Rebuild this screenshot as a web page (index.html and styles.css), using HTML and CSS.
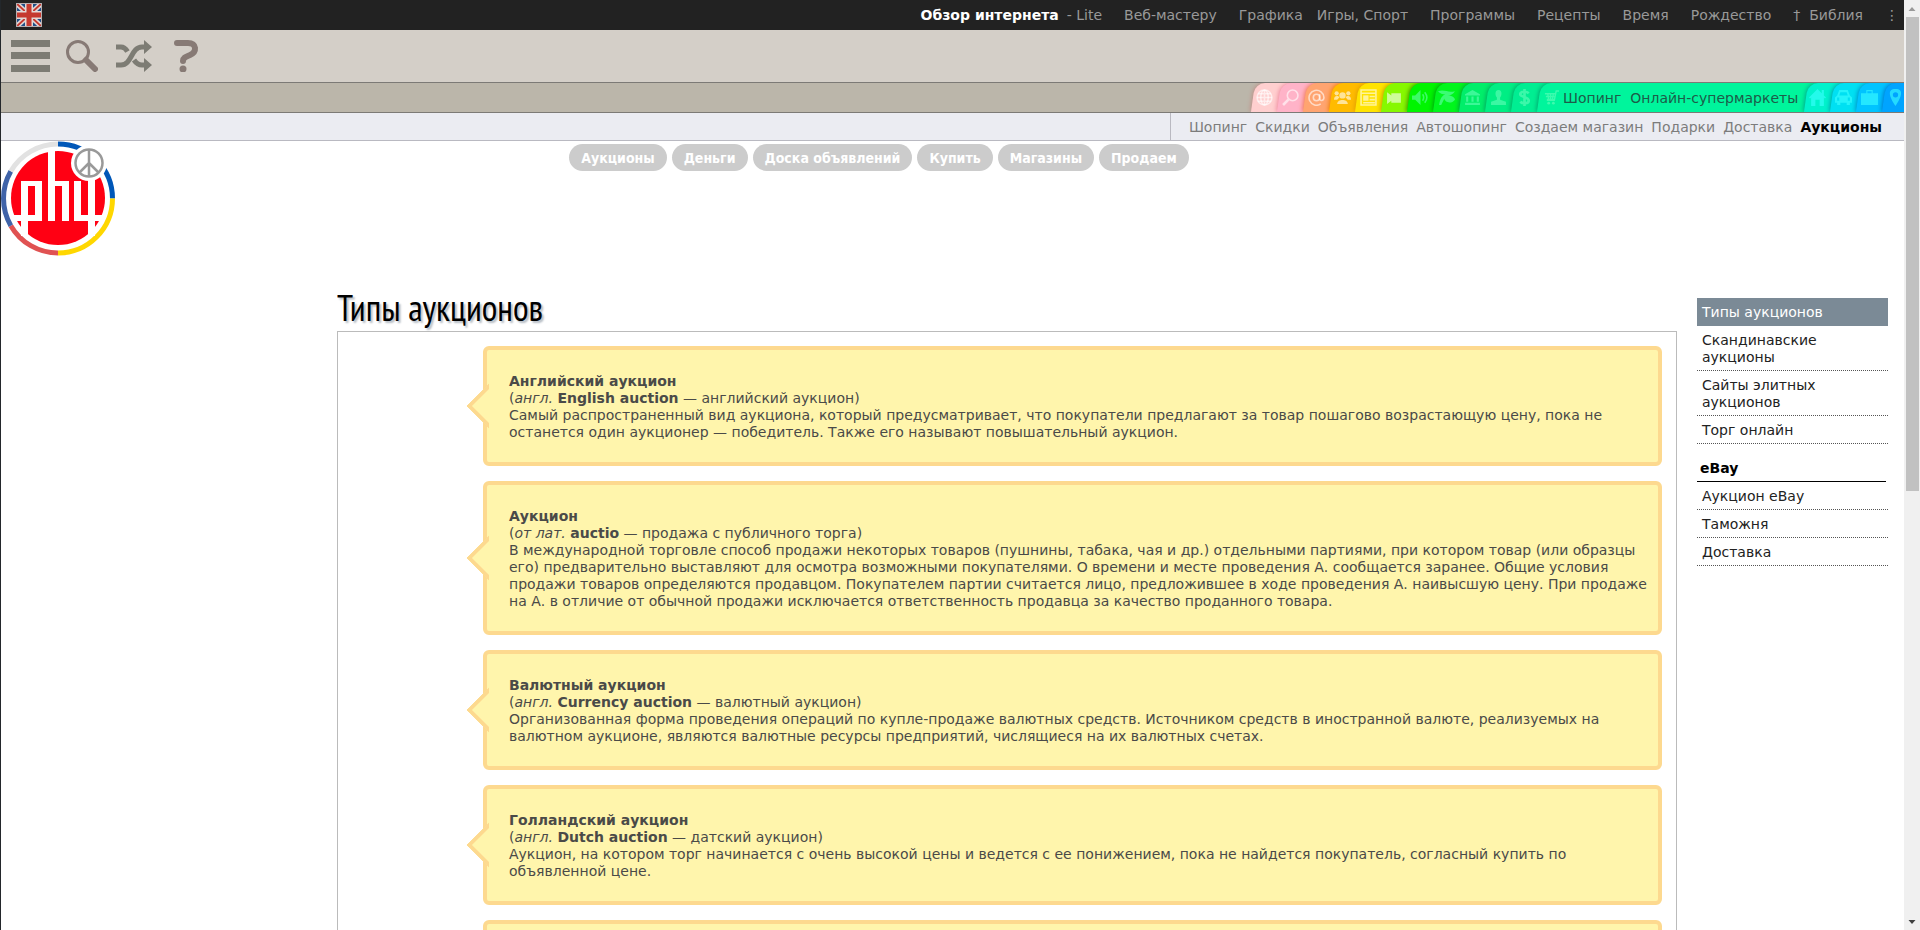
FILE: index.html
```html
<!DOCTYPE html>
<html lang="ru">
<head>
<meta charset="utf-8">
<title>Типы аукционов</title>
<link rel="stylesheet" href="styles.css">
</head>
<body>
<div class="window">
<div class="page">
  <header>
    <div class="topbar">
      <a class="flag" href="#" aria-label="English">
        <svg width="26" height="24" viewBox="0 0 26 24">
          <rect width="26" height="24" fill="#1f4f87"/>
          <path d="M0 0L26 24M26 0L0 24" stroke="#e3d9d6" stroke-width="5"/>
          <path d="M0 0L26 24M26 0L0 24" stroke="#c5392f" stroke-width="2"/>
          <path d="M13 0V24M0 12H26" stroke="#e3d9d6" stroke-width="8"/>
          <path d="M13 0V24M0 12H26" stroke="#c5392f" stroke-width="5"/>
          <rect x=".5" y=".5" width="25" height="23" fill="none" stroke="#b9aeb0"/>
        </svg>
      </a>
      <nav class="topnav">
        <a class="current" href="#">Обзор интернета</a>
        <a class="lite" href="#">- Lite</a>
        <a href="#">Веб-мастеру</a>
        <a href="#">Графика</a>
        <a class="near" href="#">Игры, Спорт</a>
        <a href="#">Программы</a>
        <a href="#">Рецепты</a>
        <a href="#">Время</a>
        <a href="#">Рождество</a>
        <a href="#">†&nbsp; Библия</a>
        <a href="#">⋮</a>
      </nav>
    </div>
    <div class="toolbar">
      <button type="button" aria-label="Меню"><svg width="39" height="32" viewBox="0 0 39 32"><path d="M0 3.5H39M0 15.5H39M0 28.500H39" stroke="#7d7c74" stroke-width="7"/></svg></button>
      <button type="button" aria-label="Поиск"><svg width="32" height="32" viewBox="0 0 32 32" fill="none" stroke="#877a75"><circle cx="12" cy="12" r="10.500" stroke-width="3"/><path d="M20 20L29 29" stroke-width="6" stroke-linecap="round"/></svg></button>
      <button type="button" aria-label="Случайно"><svg width="38" height="32" viewBox="0 0 38 32"><g fill="none" stroke="#7d7c74" stroke-width="5"><path d="M2 25H7C18 25 17 7 28 7H31"/><path d="M2 7H7C10 7 12 9 13.500 11.500M20 20C22 23 24 25 28 25H31"/></g><path d="M30 0L38 7L30 14ZM30 18L38 25L30 32Z" fill="#7d7c74"/></svg></button>
      <button type="button" aria-label="Помощь"><svg width="34" height="32" viewBox="0 0 34 32"><path d="M9 3H20C29 3 29 12 22 15C17 17 15 18 15 21" fill="none" stroke="#877a75" stroke-width="6" stroke-linecap="round"/><circle cx="15" cy="29" r="3.500" fill="#877a75"/></svg></button>
    </div>
    <nav class="tabs">
      <a class="tab t1" href="#" aria-label="Интернет"><svg viewBox="0 0 16 16"><g class="line"><circle cx="8" cy="8" r="7"/><ellipse cx="8" cy="8" rx="3.500" ry="7"/><path d="M8 1V15M1 8H15M2 4.500H14M2 11.500H14"/></g></svg></a>
      <a class="tab t2" href="#" aria-label="Поиск"><svg viewBox="0 0 16 16"><g class="line"><circle cx="10" cy="6" r="5"/><path d="M6 10L1 15" stroke-width="2.500"/></g></svg></a>
      <a class="tab t3" href="#" aria-label="Почта"><svg viewBox="0 0 16 16"><g class="line"><circle cx="8" cy="8" r="3"/><path d="M11 5V9C11 12 15 11 15 8A7 7 0 1 0 12 14"/></g></svg></a>
      <a class="tab t4" href="#" aria-label="Общение"><svg viewBox="0 0 16 16"><circle cx="8" cy="6" r="3"/><circle cx="2.500" cy="4" r="2"/><circle cx="13.500" cy="4" r="2"/><path d="M3 14C3 9 13 9 13 14ZM0 10C0 6 4 6 5 8L3 10ZM16 10C16 6 12 6 11 8L13 10Z"/></svg></a>
      <a class="tab t5" href="#" aria-label="Новости"><svg viewBox="0 0 16 16"><path class="line" d="M1 1H15V15H1ZM1 4H15M9 7H14M9 10H14M3 13H14"/><path d="M3 6H8V11H3Z"/></svg></a>
      <a class="tab t6" href="#" aria-label="Видео"><svg viewBox="0 0 16 16"><path d="M1 3L5 6V4H14V13H5V11L1 14Z"/></svg></a>
      <a class="tab t7" href="#" aria-label="Музыка"><svg viewBox="0 0 16 16"><path d="M0 6H3L8 1V15L3 10H0Z"/><path class="line" d="M10 5Q12 8 10 11M12 3Q16 8 12 13"/></svg></a>
      <a class="tab t8" href="#" aria-label="Природа"><svg viewBox="0 0 16 16"><path d="M0 2C7 0 9 4 16 2C14 5 12 6 9 6C13 6 16 8 16 10C12 15 6 12 6 9L3 15H1C2 9 4 6 7 5C4 5 2 4 0 2Z"/></svg></a>
      <a class="tab t9" href="#" aria-label="Культура"><svg viewBox="0 0 16 16"><path d="M8 1L15 5V6H1V5ZM2 7H4V12H2ZM7 7H9V12H7ZM12 7H14V12H12ZM1 13H15V15H1Z"/></svg></a>
      <a class="tab t10" href="#" aria-label="Люди"><svg viewBox="0 0 16 16"><path d="M8 1C12 1 11 7 9.500 8V10L15 12V15H1V12L6.500 10V8C5 7 4 1 8 1Z"/></svg></a>
      <a class="tab t11" href="#" aria-label="Финансы"><svg viewBox="0 0 16 16"><path d="M12 4C10 2 4 2 4 5C4 8 12 7 12 11C12 14 6 14 4 12M8 0V16" fill="none" stroke="currentColor" stroke-width="2.500"/></svg></a>
      <div class="tab t12 open">
        <svg viewBox="0 0 16 16"><path class="line" d="M16 1H13L11 11H3M1 4H12M2 7H11M3 10H11M4 4L5 10M7 4V10M10 4L9 10"/><circle cx="5" cy="14" r="1.500"/><circle cx="10" cy="14" r="1.500"/></svg>
        <a href="#">Шопинг</a><a href="#">Онлайн-супермаркеты</a>
      </div>
      <a class="tab t13" href="#" aria-label="Дом"><svg viewBox="0 0 16 16"><path d="M8 0L12 4V1H14V6L16 8L15 9L14 8V16H10V10H6V16H2V8L1 9L0 8Z"/></svg></a>
      <a class="tab t14" href="#" aria-label="Авто"><svg viewBox="0 0 16 16"><path fill-rule="evenodd" d="M4 1H12L14 6L16 8V13H14V15H11V13H5V15H2V13H0V8L2 6ZM5 3L4 6H12L11 3ZM2 8V11H4V8ZM12 8V11H14V8Z"/></svg></a>
      <a class="tab t15" href="#" aria-label="Работа"><svg viewBox="0 0 16 16"><path fill-rule="evenodd" d="M5 1H11V4H16V15H0V4H5ZM6 2V4H10V2Z"/></svg></a>
      <a class="tab t16" href="#" aria-label="Карта"><svg viewBox="0 0 16 16"><path fill-rule="evenodd" d="M8 0C16 0 14 7 8 16C2 7 0 0 8 0ZM8 3A2.500 2.500 0 1 0 8 8A2.500 2.500 0 1 0 8 3Z"/></svg></a>
    </nav>
    <div class="subbar">
      <nav class="subnav">
        <a href="#">Шопинг</a><a href="#">Скидки</a><a href="#">Объявления</a><a href="#">Автошопинг</a><a href="#">Создаем магазин</a><a href="#">Подарки</a><a href="#">Доставка</a><a class="current" href="#">Аукционы</a>
      </nav>
    </div>
  </header>

  <div class="brand">
    <a class="logo" href="#" aria-label="phy">
      <svg width="115" height="115" viewBox="0 0 115 115">
        <g fill="none" stroke-width="5">
          <path d="M57 3A54.500 54.500 0 0 1 111.500 57.500" stroke="#0057b8"/>
          <path d="M111.500 57.500A54.500 54.500 0 0 1 57 112" stroke="#ffd700"/>
          <path d="M57 112A54.500 54.500 0 0 1 9.800 84.700" stroke="#e05252"/>
          <path d="M9.800 84.700A54.500 54.500 0 0 1 9.800 30.300" stroke="#3f63a8"/>
          <path d="M9.800 30.300A54.500 54.500 0 0 1 57 3" stroke="#e2e2e2"/>
        </g>
        <circle cx="57" cy="57" r="47" fill="#ff0013"/>
        <g fill="#fff">
          <rect x="20" y="40" width="7" height="55"/><rect x="20" y="40" width="21" height="5"/><rect x="34" y="40" width="7" height="40"/><rect x="12" y="74" width="29" height="6"/>
          <rect x="47" y="8" width="7" height="72"/><rect x="47" y="40" width="21" height="5"/><rect x="61" y="40" width="7" height="40"/>
          <rect x="73" y="40" width="7" height="40"/><rect x="73" y="74" width="29" height="6"/><rect x="87" y="34" width="7" height="61"/>
        </g>
        <circle cx="88" cy="22" r="18" fill="#fff"/>
        <g fill="none" stroke="#999" stroke-width="2.500"><circle cx="88" cy="22" r="13.500"/><path d="M88 8V36M88 22L78 32M88 22L98 32"/></g>
      </svg>
    </a>
    <nav class="pills">
      <a href="#">Аукционы</a><a href="#">Деньги</a><a href="#">Доска объявлений</a><a href="#">Купить</a><a href="#">Магазины</a><a href="#">Продаем</a>
    </nav>
  </div>

  <div class="content">
    <main>
      <h1>Типы аукционов</h1>
      <div class="panel">
        <article class="card"><h2>Английский аукцион</h2><p>(<i>англ.</i> <b>English auction</b> — английский аукцион)</p><p>Самый распространенный вид аукциона, который предусматривает, что покупатели предлагают за товар пошагово возрастающую цену, пока не останется один аукционер — победитель. Также его называют повышательный аукцион.</p></article>
        <article class="card"><h2>Аукцион</h2><p>(<i>от лат.</i> <b>auctio</b> — продажа с публичного торга)</p><p>В международной торговле способ продажи некоторых товаров (пушнины, табака, чая и др.) отдельными партиями, при котором товар (или образцы его) предварительно выставляют для осмотра возможными покупателями. О времени и месте проведения А. сообщается заранее. Общие условия продажи товаров определяются продавцом. Покупателем партии считается лицо, предложившее в ходе проведения А. наивысшую цену. При продаже на А. в отличие от обычной продажи исключается ответственность продавца за качество проданного товара.</p></article>
        <article class="card"><h2>Валютный аукцион</h2><p>(<i>англ.</i> <b>Currency auction</b> — валютный аукцион)</p><p>Организованная форма проведения операций по купле-продаже валютных средств. Источником средств в иностранной валюте, реализуемых на валютном аукционе, являются валютные ресурсы предприятий, числящиеся на их валютных счетах.</p></article>
        <article class="card"><h2>Голландский аукцион</h2><p>(<i>англ.</i> <b>Dutch auction</b> — датский аукцион)</p><p>Аукцион, на котором торг начинается с очень высокой цены и ведется с ее понижением, пока не найдется покупатель, согласный купить по объявленной цене.</p></article>
        <article class="card"></article>
      </div>
    </main>
    <aside class="side">
      <ul>
        <li><a class="current" href="#">Типы аукционов</a></li>
        <li><a href="#">Скандинавские аукционы</a></li>
        <li><a href="#">Сайты элитных аукционов</a></li>
        <li><a href="#">Торг онлайн</a></li>
      </ul>
      <h3>eBay</h3>
      <ul>
        <li><a href="#">Аукцион eBay</a></li>
        <li><a href="#">Таможня</a></li>
        <li><a href="#">Доставка</a></li>
      </ul>
    </aside>
  </div>
</div>
<div class="scrollbar" aria-hidden="true">
  <svg class="up" width="16" height="17" viewBox="0 0 16 17"><path d="M4.500 11L8 7L11.500 11Z"/></svg>
  <div class="thumb"></div>
  <svg class="down" width="16" height="17" viewBox="0 0 16 17"><path d="M4.500 7L8 11L11.500 7Z"/></svg>
</div>
</div>
</body>
</html>
```
FILE: styles.css
```css
* { box-sizing: border-box; }
body {
  margin: 0;
  background: #fff;
  color: #4a4a48;
  font: 14px/17px Verdana, "DejaVu Sans", sans-serif;
}
a { color: inherit; text-decoration: none; }
h1, h2, h3, p, ul { margin: 0; padding: 0; }
ul { list-style: none; }
svg { display: block; }

.window { display: flex; height: 100vh; overflow: hidden; }
.page { flex: 1; min-width: 0; border-left: 1px solid #23272b; }

.topbar {
  display: flex;
  align-items: center;
  justify-content: space-between;
  height: 30px;
  padding: 0 5px 0 15px;
  background: #222;
  color: #999;
}
.topnav { display: flex; white-space: nowrap; }
.topnav a { margin-left: 22px; }
.topnav .current { color: #fff; font-weight: bold; }
.topnav .lite { margin-left: 8px; }
.topnav .near { margin-left: 14px; }

.toolbar {
  display: flex;
  align-items: center;
  gap: 16px;
  height: 53px;
  padding-left: 10px;
  background: #d4cfc8;
  border-bottom: 1px solid #7c7a76;
}
.toolbar button { padding: 0; border: 0; background: none; }

.tabs {
  display: flex;
  justify-content: flex-end;
  height: 30px;
  overflow: hidden;
  background: #bbb6aa;
  border-bottom: 1px solid #7c7a76;
}
.tab {
  position: relative;
  display: flex;
  align-items: center;
  width: 26px;
  padding-left: 4px;
  color: rgba(255, 255, 255, .6);
}
.tab::before {
  content: "";
  position: absolute;
  top: 0;
  bottom: 0;
  left: 1px;
  right: -14px;
  background: var(--tone);
  border-top-left-radius: 10px;
  box-shadow: -1px 0 4px var(--edge);
  transform: skewX(-8deg);
}
.tab svg { position: relative; flex: none; width: 17px; height: 17px; fill: currentColor; }
.tab .line { fill: none; stroke: currentColor; stroke-width: 1.500; }
.open { width: 267px; padding-left: 6px; gap: 9px; }
.open a { position: relative; padding-top: 2px; color: #1d5c49; }
.open svg { width: 15px; margin-right: -5px; }
.t1 { --tone: #ffcfcf; --edge: #c09088; }
.t2 { --tone: #ffb3c8; --edge: #f08ca0; }
.t3 { --tone: #ffa470; --edge: #f07858; }
.t4 { --tone: #ffbb00; --edge: #f08000; }
.t5 { --tone: #ffe300; --edge: #e0a000; }
.t6 { --tone: #86f800; --edge: #c0a000; }
.t7 { --tone: #00f500; --edge: #409000; }
.t8 { --tone: #00f61c; --edge: #00a010; }
.t9 { --tone: #00ee6a; --edge: #00a040; }
.t10 { --tone: #00ee84; --edge: #00a860; }
.t11 { --tone: #00ee92; --edge: #00a868; }
.t12 { --tone: #00f59c; --edge: #00a870; }
.t13 { --tone: #00f2cc; --edge: #00a890; }
.t14 { --tone: #00e0f2; --edge: #00a0b0; }
.t15 { --tone: #00c4ff; --edge: #0090c8; }
.t16 { --tone: #00a4ff; --edge: #0078d0; width: 21px; }
.t7, .t8, .t9, .t10, .t11, .t12 { color: rgba(110, 255, 190, .55); }
.t13, .t14, .t15, .t16 { color: rgba(60, 255, 255, .6); }

.subbar {
  display: flex;
  justify-content: flex-end;
  height: 28px;
  background: #ebecf2;
  border-bottom: 1px solid #b9b9c1;
  color: #7c7c7c;
}
.subnav {
  display: flex;
  align-items: center;
  gap: 8px;
  padding: 1px 22px 0 18px;
  border-left: 1px solid #b9b9c1;
  white-space: nowrap;
}
.subnav .current { color: #000; font-weight: bold; }

.brand { display: flex; align-items: flex-start; height: 150px; }
.pills {
  flex: 1;
  display: flex;
  justify-content: center;
  gap: 5px;
  padding: 3px 262px 0 0;
}
.pills a {
  padding: 6px 12px 4px;
  border-radius: 14px;
  background: #ccc;
  color: #fff;
  font-family: "DejaVu Sans Condensed", "Noto Sans", sans-serif;
  font-weight: bold;
  white-space: nowrap;
}

.content { display: flex; align-items: flex-start; padding: 0 16px 0 336px; gap: 20px; }
main { flex: 1; min-width: 0; }
h1 {
  height: 40px;
  color: #000;
  font: 36px/34px "PT Sans Narrow", "Open Sans Condensed", "Liberation Sans Narrow", sans-serif;
  text-shadow: 2px 2px 2px #b5bcc4;
}
.panel {
  display: flex;
  flex-direction: column;
  gap: 15px;
  padding: 14px 14px 14px 145px;
  border: 1px solid #bbb;
}
.card {
  position: relative;
  min-height: 120px;
  padding: 23px 6px 21px 22px;
  border: 4px solid #fdd98f;
  border-radius: 6px;
  background: #fff5ac;
}
.card::before {
  content: "";
  position: absolute;
  left: -14px;
  top: 50%;
  width: 28px;
  height: 28px;
  margin-top: -16px;
  border: solid #fdd98f;
  border-width: 0 0 4px 4px;
  background: #fff5ac;
  clip-path: polygon(0 0, 100% 100%, 0 100%);
  transform: rotate(45deg);
}
.card h2 { font-size: 14px; line-height: 17px; }

.side { width: 191px; margin-top: 7px; color: #222; }
.side a { display: block; padding: 6px 5px 4px; border-bottom: 1px dotted #555; }
.side .current { background: #7b8a96; border-color: #7b8a96; color: #fff; }
.side h3 {
  margin: 12px 2px 0 0;
  padding: 4px 3px;
  border-bottom: 1px solid #000;
  color: #000;
  font-size: 14px;
  line-height: 17px;
}

.scrollbar {
  display: flex;
  flex-direction: column;
  width: 16px;
  background: #f0f0f0;
}
.thumb { height: 51%; margin: 0 1px 0 2px; background: #c1c1c1; }
.up { fill: #999; }
.down { margin-top: auto; fill: #404040; }
```
